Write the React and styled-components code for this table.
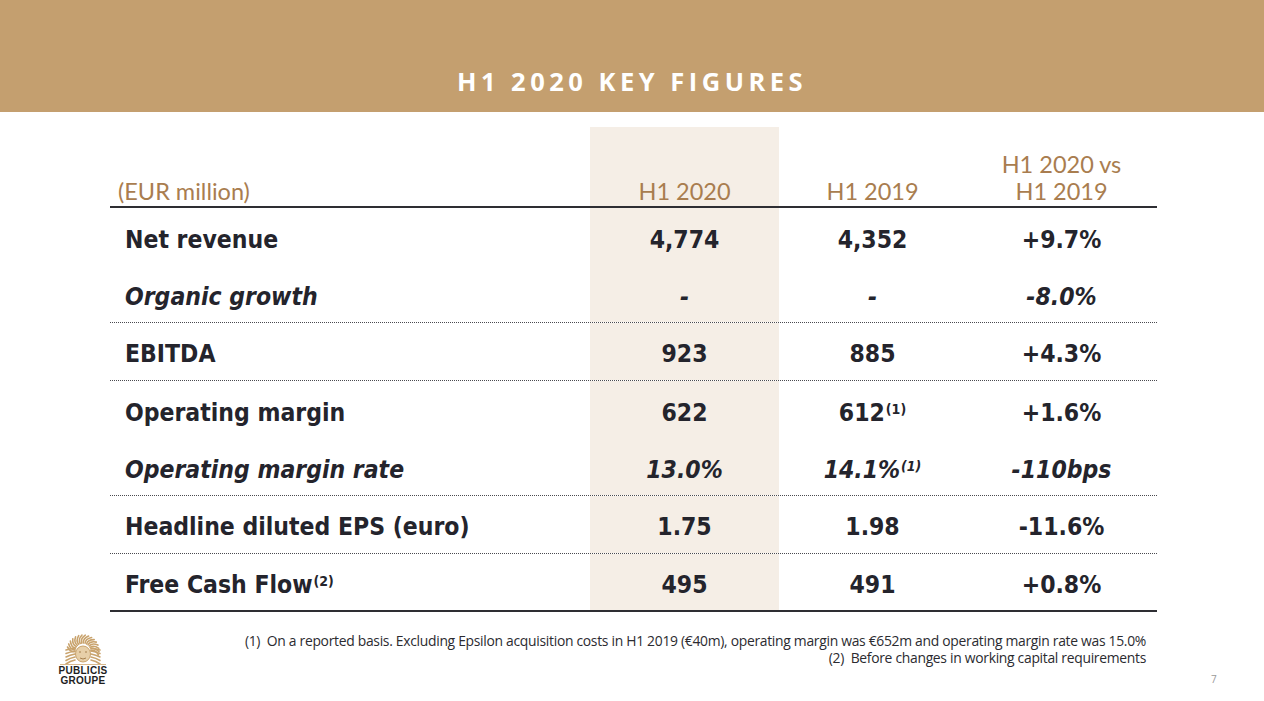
import React from "react";
import styled, { createGlobalStyle } from "styled-components";

const Global = createGlobalStyle`
  html, body { margin: 0; padding: 0; background: #fff; }
  body { width: 1264px; height: 701px; overflow: hidden; font-family: "Open Sans", "Noto Sans", sans-serif; }
`;

const Page = styled.div`
  width: 1264px;
  height: 701px;
  display: flex;
  flex-direction: column;
  background: #fff;
`;

const Banner = styled.header`
  height: 112px;
  background: #c49f6f;
  display: flex;
  align-items: flex-end;
  justify-content: center;
  padding-bottom: 16px;
  box-sizing: border-box;
`;

const Title = styled.h1`
  margin: 0;
  color: #fff;
  font-family: "Open Sans", sans-serif;
  font-weight: 700;
  font-size: 25.5px;
  letter-spacing: 4.5px;
  line-height: 30px;
  padding-left: 0;
`;

const Table = styled.section`
  margin: 15px 0 0 110px;
  width: 1047px;
  display: flex;
  flex-direction: column;
`;

const Row = styled.div`
  display: grid;
  grid-template-columns: 480px 189px 187px 191px;
  height: ${(p) => p.$h || 57.6}px;
  box-sizing: border-box;
  border-bottom: ${(p) =>
    p.$line === "solid" ? "2px solid #2e2e33" : p.$line === "dotted" ? "1px dotted #4a4a4f" : "none"};
`;

const HeadCell = styled.div`
  display: flex;
  flex-direction: column;
  justify-content: flex-end;
  align-items: ${(p) => (p.$left ? "flex-start" : "center")};
  padding: 0 0 2px ${(p) => (p.$left ? "8px" : "0")};
  background: ${(p) => (p.$hl ? "#f5eee6" : "transparent")};
  color: #a97d4f;
  font-family: Lato, "Open Sans", sans-serif;
  font-size: 23.5px;
  line-height: 28px;
`;

const HeadLine = styled.span`
  display: block;
  height: 27px;
  white-space: nowrap;
`;

const Cell = styled.div`
  display: flex;
  align-items: center;
  justify-content: ${(p) => (p.$left ? "flex-start" : "center")};
  padding: 5px 0 0 ${(p) => (p.$left ? "15px" : "0")};
  background: ${(p) => (p.$hl ? "#f5eee6" : "transparent")};
  color: #24242c;
  font-family: "DejaVu Sans Condensed", "DejaVu Sans", sans-serif;
  font-stretch: condensed;
  font-weight: 700;
  font-style: ${(p) => (p.$it ? "italic" : "normal")};
  font-size: 24.5px;
  letter-spacing: 0;
  white-space: nowrap;
`;

const Sup = styled.sup`
  font-size: 14px;
  line-height: 0;
  position: relative;
  top: -3px;
  margin-left: 1px;
  letter-spacing: 0;
`;

const Footer = styled.footer`
  flex: 1;
  display: grid;
  grid-template-columns: 58px 50px 1fr 56px;
  padding-top: 17px;
  box-sizing: border-box;
`;

const Logo = styled.div`
  grid-column: 2;
  display: flex;
  flex-direction: column;
  align-items: center;
  width: 50px;
  padding-top: 3px;
`;

const LogoWord = styled.span`
  font-family: "Liberation Sans", Arial, sans-serif;
  font-weight: 700;
  font-size: 10px;
  line-height: 10px;
  color: #1e1e1e;
  letter-spacing: 0.3px;
`;

const Notes = styled.div`
  grid-column: 3;
  display: flex;
  flex-direction: column;
  align-items: flex-end;
  padding-right: 62px;
  padding-top: 3px;
`;

const Note = styled.p`
  margin: 0;
  font-family: "Open Sans", sans-serif;
  font-size: 13.9px;
  line-height: 17px;
  letter-spacing: -0.3px;
  color: #2b2b30;
`;

const PageNum = styled.div`
  grid-column: 4;
  font-family: "Open Sans", sans-serif;
  font-size: 10px;
  color: #9a9a9a;
  padding-top: 43px;
  padding-left: 3px;
`;

const Sun = () => {
  const rays = [];
  const n = 16;
  for (let i = 0; i < n; i++) {
    const a = Math.PI + (i / (n - 1)) * Math.PI;
    const cx = 25, cy = 19;
    const r1 = 8, r2 = 16;
    const x1 = cx + Math.cos(a - 0.05) * r1, y1 = cy + Math.sin(a - 0.05) * r1;
    const x2 = cx + Math.cos(a + 0.25) * r2, y2 = cy + Math.sin(a + 0.25) * r2;
    const mx = cx + Math.cos(a - 0.12) * 12.5, my = cy + Math.sin(a - 0.12) * 12.5;
    rays.push(<path key={i} d={`M${x1.toFixed(1)} ${y1.toFixed(1)} Q${mx.toFixed(1)} ${my.toFixed(1)} ${x2.toFixed(1)} ${y2.toFixed(1)}`} />);
  }
  const side = [];
  for (let i = 0; i < 5; i++) {
    const y = 16 + i * 3;
    side.push(<path key={"l" + i} d={`M17 ${y} q-5 1 -9 ${2 + i * 0.5}`} />);
    side.push(<path key={"r" + i} d={`M33 ${y} q5 1 9 ${2 + i * 0.5}`} />);
  }
  return (
    <svg width="50" height="34" viewBox="0 0 50 34">
      <g fill="none" stroke="#c9a36d" strokeWidth="1.6" strokeLinecap="round">
        {rays}
        {side}
      </g>
      <ellipse cx="25" cy="22" rx="7.5" ry="8" fill="#e7cfa8" stroke="#c9a36d" strokeWidth="1" />
      <path d="M21 20 h2 M27 20 h2 M22 26 q3 2 6 0" stroke="#a6804f" strokeWidth="1" fill="none" />
      <line x1="2" y1="32.5" x2="48" y2="32.5" stroke="#d8b98d" strokeWidth="1" />
    </svg>
  );
};

const rows = [
  { label: "Net revenue", v: ["4,774", "4,352", "+9.7%"], line: "none" },
  { label: "Organic growth", v: ["-", "-", "-8.0%"], it: true, line: "dotted" },
  { label: "EBITDA", v: ["923", "885", "+4.3%"], line: "dotted" },
  { label: "Operating margin", v: ["622", ["612", "(1)"], "+1.6%"], line: "none" },
  { label: "Operating margin rate", v: ["13.0%", ["14.1%", "(1)"], "-110bps"], it: true, line: "dotted" },
  { label: "Headline diluted EPS (euro)", v: ["1.75", "1.98", "-11.6%"], line: "dotted" },
  { label: ["Free Cash Flow", "(2)"], v: ["495", "491", "+0.8%"], line: "solid" },
];

const render = (x) =>
  Array.isArray(x) ? (
    <>
      {x[0]}
      <Sup>{x[1]}</Sup>
    </>
  ) : (
    x
  );

export default function App() {
  return (
    <Page>
      <Global />
      <Banner>
        <Title>H1 2020 KEY FIGURES</Title>
      </Banner>
      <Table>
        <Row $h={81} $line="solid">
          <HeadCell $left><HeadLine>(EUR million)</HeadLine></HeadCell>
          <HeadCell $hl><HeadLine>H1 2020</HeadLine></HeadCell>
          <HeadCell><HeadLine>H1 2019</HeadLine></HeadCell>
          <HeadCell>
            <HeadLine>H1 2020 vs</HeadLine>
            <HeadLine>H1 2019</HeadLine>
          </HeadCell>
        </Row>
        {rows.map((r, i) => (
          <Row key={i} $line={r.line} $h={r.line === "solid" ? 58.5 : 57.6}>
            <Cell $left $it={r.it}>
              {render(r.label)}
            </Cell>
            <Cell $hl $it={r.it}>{render(r.v[0])}</Cell>
            <Cell $it={r.it}>{render(r.v[1])}</Cell>
            <Cell $it={r.it}>{render(r.v[2])}</Cell>
          </Row>
        ))}
      </Table>
      <Footer>
        <Logo>
          <Sun />
          <LogoWord>PUBLICIS</LogoWord>
          <LogoWord>GROUPE</LogoWord>
        </Logo>
        <Notes>
          <Note>
            (1)&nbsp; On a reported basis. Excluding Epsilon acquisition costs in H1 2019 (€40m), operating margin was €652m and operating margin rate was 15.0%
          </Note>
          <Note>(2)&nbsp; Before changes in working capital requirements</Note>
        </Notes>
        <PageNum>7</PageNum>
      </Footer>
    </Page>
  );
}
